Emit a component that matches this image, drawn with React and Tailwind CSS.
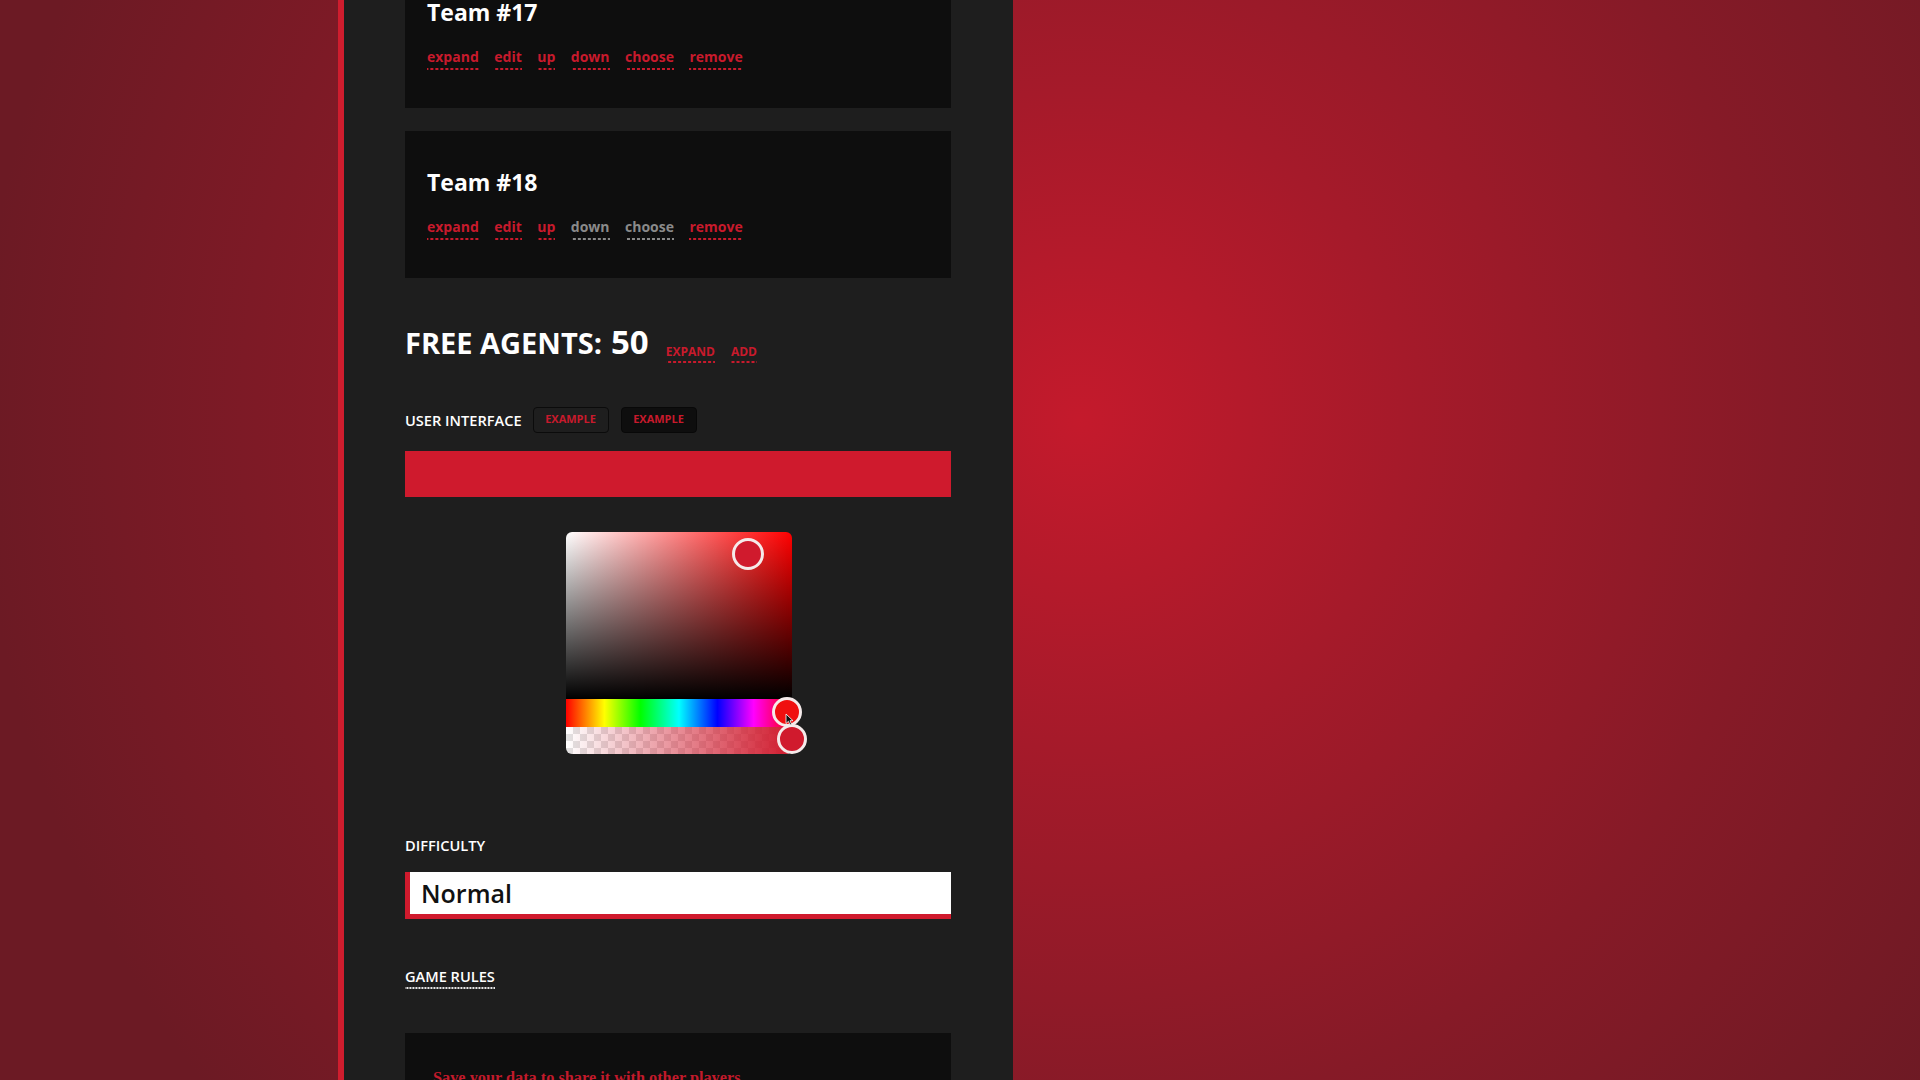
import React from "react";

const dash = "bg-[linear-gradient(to_right,currentColor_65%,transparent_65%)] bg-[length:5px_2px] bg-repeat-x bg-bottom";

function Link({ children, gray }) {
  return (
    <span className={`${dash} pb-[3px] ${gray ? "text-[#8a8a8a]" : "text-[#c81a2c]"}`}>{children}</span>
  );
}

function TeamCard({ name, grayDown }) {
  return (
    <div className="h-[147px] bg-[#0e0e0e] px-[22px] pt-[37px]">
      <div className="text-[23px] font-bold leading-[29px] text-white">{name}</div>
      <div className="mt-[20px] flex gap-[15.5px] text-[14px] font-bold leading-[20px]">
        <Link>expand</Link>
        <Link>edit</Link>
        <Link>up</Link>
        <Link gray={grayDown}>down</Link>
        <Link gray={grayDown}>choose</Link>
        <Link>remove</Link>
      </div>
    </div>
  );
}

export default function App() {
  return (
    <div className="h-[1080px] w-[1920px] overflow-hidden bg-[radial-gradient(circle_at_1080px_420px,#c41a2c_0px,#a51a2a_330px,#861a27_700px,#6c1a24_1100px)] font-['Open_Sans',sans-serif]">
      <div className="ml-[338px] flex h-full w-[675px] flex-col border-l-[6px] border-[#cf1d2e] bg-[#1e1e1e] pl-[61px] pr-[62px]">
        <div className="-mt-[39px]">
          <TeamCard name="Team #17" />
          <div className="mt-[23px]">
            <TeamCard name="Team #18" grayDown />
          </div>

          <div className="mt-[44px] flex items-baseline text-white">
            <span className="text-[29px] font-bold leading-[1.2]">FREE AGENTS:</span>
            <span className="ml-[9px] text-[33px] font-bold leading-[1.2]">50</span>
            <span className={`ml-[17px] translate-y-[2px] ${dash} pb-[3px] text-[12px] font-bold leading-[16px] text-[#c81a2c]`}>EXPAND</span>
            <span className={`ml-[16px] translate-y-[2px] ${dash} pb-[3px] text-[12px] font-bold leading-[16px] text-[#c81a2c]`}>ADD</span>
          </div>

          <div className="mt-[45px] flex h-[26px] items-center">
            <span className="text-[14.6px] font-semibold leading-[20px] text-white">USER INTERFACE</span>
            <span className="ml-[11px] flex h-[26px] w-[76px] items-center justify-center rounded-[4px] border border-[#0b0b0b] bg-[#1e1e1e] text-[11px] font-bold text-[#c81a2c]">EXAMPLE</span>
            <span className="ml-[12px] flex h-[26px] w-[76px] items-center justify-center rounded-[4px] border border-[#080808] bg-[#0e0e0e] text-[11px] font-bold text-[#c81a2c]">EXAMPLE</span>
          </div>

          <div className="mt-[18px] h-[46px] bg-[#cf1a2d]" />

          <div className="relative ml-[161px] mt-[35px] w-[226px]">
            <div className="h-[167px] rounded-t-[6px] bg-[linear-gradient(to_top,#000_0%,rgba(0,0,0,0.75)_25%,rgba(0,0,0,0)_100%),linear-gradient(to_right,#fff,#ff0000)]" />
            <div className="h-[28px] bg-[linear-gradient(to_right,#ff0000_0%,#ffff00_17%,#00ff00_33%,#00ffff_50%,#0000ff_67%,#ff00ff_83%,#ff0000_100%)]" />
            <div className="relative h-[27px] overflow-hidden rounded-b-[6px] bg-[conic-gradient(#e2e2e2_25%,#ffffff_0_50%,#e2e2e2_0_75%,#ffffff_0)] bg-[length:14px_14px]">
              <div className="absolute inset-0 bg-[linear-gradient(to_right,rgba(208,26,45,0),#d01a2d)]" />
            </div>
            <div className="absolute left-[166px] top-[6px] h-[32px] w-[32px] rounded-full border-[3px] border-[#f5eaea] bg-[#d01a2d]" />
            <div className="absolute left-[206px] top-[165px] h-[30px] w-[30px] rounded-full border-[3px] border-[#f5eaea] bg-[#f00f0f]" />
            <div className="absolute left-[211px] top-[192px] h-[30px] w-[30px] rounded-full border-[3px] border-[#f5eaea] bg-[#d01a2d]" />
            <svg className="absolute left-[219px] top-[181px]" width="9" height="13" viewBox="0 0 9 13">
              <path d="M1 1 L1 10.5 L3.4 8.3 L5 12 L6.6 11.3 L5 7.7 L8 7.7 Z" fill="#111" stroke="#fff" strokeWidth="0.8" />
            </svg>
          </div>

          <div className="mt-[81px] text-[14.6px] font-semibold leading-[20px] text-white">DIFFICULTY</div>
          <div className="mt-[17px] flex h-[47px] items-center border-b-[5px] border-l-[5px] border-[#d01a2d] bg-white pl-[11px] pt-[3px]">
            <span className="text-[25px] font-semibold text-[#111]">Normal</span>
          </div>

          <div className="mt-[47px] flex">
            <span className="bg-[linear-gradient(to_right,#e5e5e5_60%,transparent_60%)] bg-[length:3px_2px] bg-repeat-x bg-bottom pb-[3px] text-[14.6px] font-semibold leading-[20px] text-white">GAME RULES</span>
          </div>

          <div className="mt-[44px] h-[120px] bg-[#0e0e0e] pl-[28px] pt-[32px]">
            <span className="font-['Liberation_Serif',serif] text-[16.3px] font-bold text-[#c21a2b]">Save your data to share it with other players.</span>
          </div>
        </div>
      </div>
    </div>
  );
}
